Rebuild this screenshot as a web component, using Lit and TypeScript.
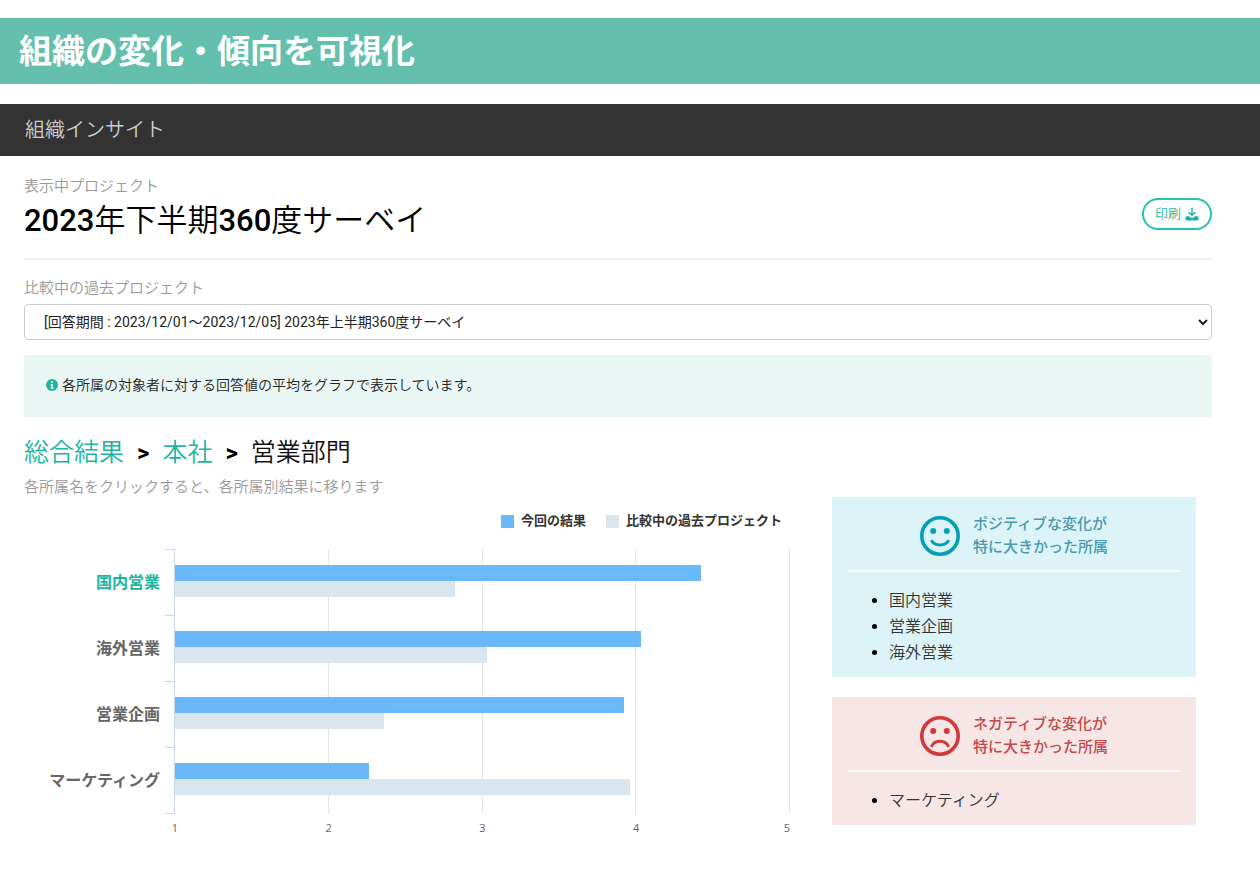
import { LitElement, html, svg, css } from "lit";
import { customElement, property } from "lit/decorators.js";
import { classMap } from "lit/directives/class-map.js";

interface Department {
  name: string;
  current: number;
  previous: number;
  active?: boolean;
}

const AXIS_MIN = 1;
const AXIS_MAX = 5;

const departments: Department[] = [
  { name: "国内営業", current: 4.42, previous: 2.82, active: true },
  { name: "海外営業", current: 4.03, previous: 3.03 },
  { name: "営業企画", current: 3.92, previous: 2.36 },
  { name: "マーケティング", current: 2.26, previous: 3.96 },
];

const percent = (value: number) =>
  `width: ${(((value - AXIS_MIN) / (AXIS_MAX - AXIS_MIN)) * 100).toFixed(2)}%`;

/** Horizontal bar chart comparing the current result with the past project. */
@customElement("result-chart")
export class ResultChart extends LitElement {
  @property({ attribute: false }) rows: Department[] = [];

  static styles = css`
    :host {
      display: block;
      min-width: 0;
    }
    .legend {
      display: flex;
      justify-content: flex-end;
      gap: 20px;
      margin: 0;
      padding: 14px 8px 0 0;
      list-style: none;
      font-size: 13px;
      line-height: 20px;
      font-weight: 700;
      color: #333;
    }
    .key {
      display: flex;
      align-items: center;
      gap: 7px;
    }
    .swatch {
      width: 13px;
      height: 13px;
      background: #6ab8f7;
    }
    .swatch.past {
      background: #dbe5ed;
    }
    .chart {
      display: grid;
      grid-template-columns: 141px 10px minmax(0, 1fr);
      margin-top: 18px;
    }
    .names {
      display: grid;
      grid-auto-rows: 66px;
      align-items: center;
      justify-items: end;
      padding: 1px 5px 0 0;
      font-size: 16px;
      line-height: 24px;
      font-weight: 700;
    }
    .name {
      color: #666;
      text-decoration: none;
    }
    .name.active {
      color: #1bb5a0;
    }
    .ticks {
      display: grid;
      grid-auto-rows: 66px;
      border-bottom: 1px solid #ccd6eb;
    }
    .tick {
      border-top: 1px solid #ccd6eb;
    }
    .plot {
      display: grid;
      border-left: 1px solid #ccd6eb;
      margin-left: -1px;
    }
    .lines,
    .bars {
      grid-area: 1 / 1;
    }
    .lines {
      display: grid;
      grid-template-columns: repeat(4, 1fr);
    }
    .line {
      border-right: 1px solid #e6e6e6;
    }
    .bars {
      display: grid;
      grid-auto-rows: 66px;
    }
    .pair {
      padding-top: 16px;
    }
    .bar {
      height: 16px;
      background: #6ab8f7;
    }
    .bar.past {
      background: #dbe5ed;
    }
    .scale {
      grid-column: 3;
      display: flex;
      justify-content: space-between;
      padding-top: 6px;
      font-family: "Open Sans", "Noto Sans", sans-serif;
      font-size: 11px;
      line-height: 16px;
      font-weight: 400;
      color: #666;
    }
    .number {
      display: flex;
      justify-content: center;
      width: 0;
    }
    .number:last-child {
      justify-content: flex-end;
    }
  `;

  render() {
    return html`
      <ul class="legend">
        <li class="key"><span class="swatch"></span>今回の結果</li>
        <li class="key"><span class="swatch past"></span>比較中の過去プロジェクト</li>
      </ul>
      <div class="chart">
        <div class="names">
          ${this.rows.map(
            (r) => html`<a href="#" class=${classMap({ name: true, active: !!r.active })}>${r.name}</a>`
          )}
        </div>
        <div class="ticks">${this.rows.map(() => html`<span class="tick"></span>`)}</div>
        <div class="plot">
          <div class="lines">${[2, 3, 4, 5].map(() => html`<span class="line"></span>`)}</div>
          <div class="bars">
            ${this.rows.map(
              (r) => html`<div class="pair">
                <div class="bar" style=${percent(r.current)}></div>
                <div class="bar past" style=${percent(r.previous)}></div>
              </div>`
            )}
          </div>
        </div>
        <div class="scale">${[1, 2, 3, 4, 5].map((n) => html`<span class="number">${n}</span>`)}</div>
      </div>
    `;
  }
}

/** Panel listing the departments with the largest change in one direction. */
@customElement("change-card")
export class ChangeCard extends LitElement {
  @property() tone: "positive" | "negative" = "positive";
  @property({ attribute: false }) items: string[] = [];

  static styles = css`
    .card {
      padding: 16px 16px 11px;
      background: #dcf4f8;
    }
    .card.negative {
      background: #f7e6e6;
    }
    .head {
      display: flex;
      justify-content: center;
      align-items: center;
      gap: 13px;
      padding-bottom: 11px;
      border-bottom: 2px solid rgba(255, 255, 255, 0.8);
    }
    .face {
      flex: none;
      width: 40px;
      height: 40px;
      color: #059fb5;
    }
    .negative .face {
      color: #d03a3a;
    }
    .title {
      margin: 0;
      font-size: 15px;
      line-height: 23px;
      font-weight: 500;
      color: #4a98ad;
    }
    .negative .title {
      color: #bf4a4a;
    }
    .list {
      margin: 16px 0 0;
      padding-left: 41px;
      font-size: 16px;
      line-height: 26px;
      color: #333;
    }
    .list li::marker {
      color: #000;
    }
  `;

  render() {
    const negative = this.tone === "negative";
    const mouth = negative
      ? svg`<path d="M11.3 30.8C14.5 23.4 25.500 23.400 28.700 30.800" />`
      : svg`<path d="M11.3 24.2C14.500 30.700 25.500 30.700 28.700 24.200" />`;
    return html`
      <section class=${classMap({ card: true, negative })}>
        <div class="head">
          <svg class="face" viewBox="0 0 40 40" fill="none" stroke="currentColor" stroke-width="3" aria-hidden="true">
            <circle cx="20" cy="20" r="18.2" stroke-width="3.6" />
            <circle cx="13.2" cy="15" r="3" fill="currentColor" stroke="none" />
            <circle cx="26.8" cy="15" r="3" fill="currentColor" stroke="none" />
            ${mouth}
          </svg>
          <h2 class="title">${negative ? "ネガティブな変化が" : "ポジティブな変化が"}<br />特に大きかった所属</h2>
        </div>
        <ul class="list">
          ${this.items.map((i) => html`<li>${i}</li>`)}
        </ul>
      </section>
    `;
  }
}

@customElement("app-root")
export class AppRoot extends LitElement {
  static styles = css`
    :host {
      display: block;
      padding: 18px 0 48px;
      background: #fff;
      font-family: Roboto, "Noto Sans CJK JP", sans-serif;
      font-weight: 350;
      color: #111;
    }
    * {
      box-sizing: border-box;
    }
    .banner {
      margin: 0;
      padding: 10px 19px 8px;
      background: #65bfad;
      color: #fff;
      font-size: 33px;
      line-height: 48px;
      font-weight: 700;
    }
    .bar {
      margin-top: 20px;
      padding: 12px 25px;
      background: #333;
      color: #ccc;
      font-size: 20px;
      line-height: 28px;
    }
    .content {
      padding: 20px 48px 0 24px;
    }
    .project {
      display: flex;
      justify-content: space-between;
      align-items: center;
      padding-bottom: 16px;
      border-bottom: 2px solid #f0f0f0;
    }
    .caption {
      display: block;
      margin: 0;
      font-size: 15px;
      line-height: 20px;
      color: #999;
    }
    .title {
      margin: 4px 0 0;
      font-size: 31px;
      line-height: 42px;
      font-weight: 350;
      color: #000;
    }
    .digits {
      font-weight: 500;
    }
    .print {
      display: flex;
      align-items: center;
      gap: 4px;
      height: 32px;
      margin-top: 10px;
      padding: 0 11px;
      border: 2px solid #26c3ad;
      border-radius: 16px;
      background: #fff;
      color: #1bb5a0;
      font: inherit;
      font-size: 13px;
      line-height: 20px;
    }
    .download {
      width: 14px;
      height: 14px;
    }
    .compare {
      margin-top: 18px;
    }
    .select {
      display: block;
      width: 100%;
      height: 36px;
      margin-top: 6px;
      padding: 0 4px 0 15px;
      border: 1px solid #ccc;
      border-radius: 4px;
      background-color: #fff;
      color: #222;
      font: inherit;
      font-size: 14px;
      font-weight: 400;
    }
    .notice {
      display: flex;
      align-items: center;
      gap: 4px;
      margin: 15px 0 0;
      padding: 20px 22px 22px;
      background: #e9f6f4;
      font-size: 14px;
      line-height: 20px;
      color: #222;
    }
    .info {
      flex: none;
      width: 12px;
      height: 12px;
      color: #1bb5a0;
    }
    .crumbs {
      display: flex;
      align-items: center;
      gap: 13px;
      margin: 18px 0 6px;
      font-size: 25px;
      line-height: 36px;
    }
    .crumb {
      color: #1bb5a0;
      text-decoration: none;
    }
    .arrow {
      font-size: 24px;
      font-weight: 700;
      color: #000;
    }
    .results {
      display: grid;
      grid-template-columns: minmax(0, 1fr) 364px;
      gap: 42px;
      padding-right: 16px;
    }
    .changes {
      display: grid;
      gap: 20px;
      align-content: start;
    }
  `;

  render() {
    return html`
      <h1 class="banner">組織の変化・傾向を可視化</h1>
      <header class="bar">組織インサイト</header>
      <main class="content">
        <div class="project">
          <div>
            <p class="caption">表示中プロジェクト</p>
            <h2 class="title"><span class="digits">2023</span>年下半期<span class="digits">360</span>度サーベイ</h2>
          </div>
          <button class="print" type="button">
            印刷
            <svg class="download" viewBox="0 0 14 14" aria-hidden="true">
              <path d="M7 .8v7M3.600 5 7 8.200 10.400 5" fill="none" stroke="currentColor" stroke-width="1.5" />
              <path
                d="M1.700 9.200h2.300L7 11.200l3-2h2.300c.8 0 1.200.5 1.200 1.200v1.800c0 .8-.4 1.200-1.200 1.200H1.700c-.8 0-1.200-.4-1.200-1.200v-1.800c0-.7.4-1.200 1.200-1.200z"
                fill="currentColor"
              />
            </svg>
          </button>
        </div>
        <div class="compare">
          <label class="caption" for="past">比較中の過去プロジェクト</label>
          <select class="select" id="past">
            <option>[回答期間 : 2023/12/01～2023/12/05] 2023年上半期360度サーベイ</option>
          </select>
        </div>
        <p class="notice">
          <svg class="info" viewBox="0 0 12 12" aria-hidden="true">
            <circle cx="6" cy="6" r="6" fill="currentColor" />
            <path d="M5 2.2h2v1.6H5zM4.6 5h2.300v3.400h.7v1.300H4.500V8.400h.7V6.200h-.6z" fill="#e9f6f4" />
          </svg>
          各所属の対象者に対する回答値の平均をグラフで表示しています。
        </p>
        <nav class="crumbs">
          <a class="crumb" href="#">総合結果</a>
          <span class="arrow">&gt;</span>
          <a class="crumb" href="#">本社</a>
          <span class="arrow">&gt;</span>
          <span>営業部門</span>
        </nav>
        <p class="caption">各所属名をクリックすると、各所属別結果に移ります</p>
        <div class="results">
          <result-chart .rows=${departments}></result-chart>
          <div class="changes">
            <change-card tone="positive" .items=${["国内営業", "営業企画", "海外営業"]}></change-card>
            <change-card tone="negative" .items=${["マーケティング"]}></change-card>
          </div>
        </div>
      </main>
    `;
  }
}
